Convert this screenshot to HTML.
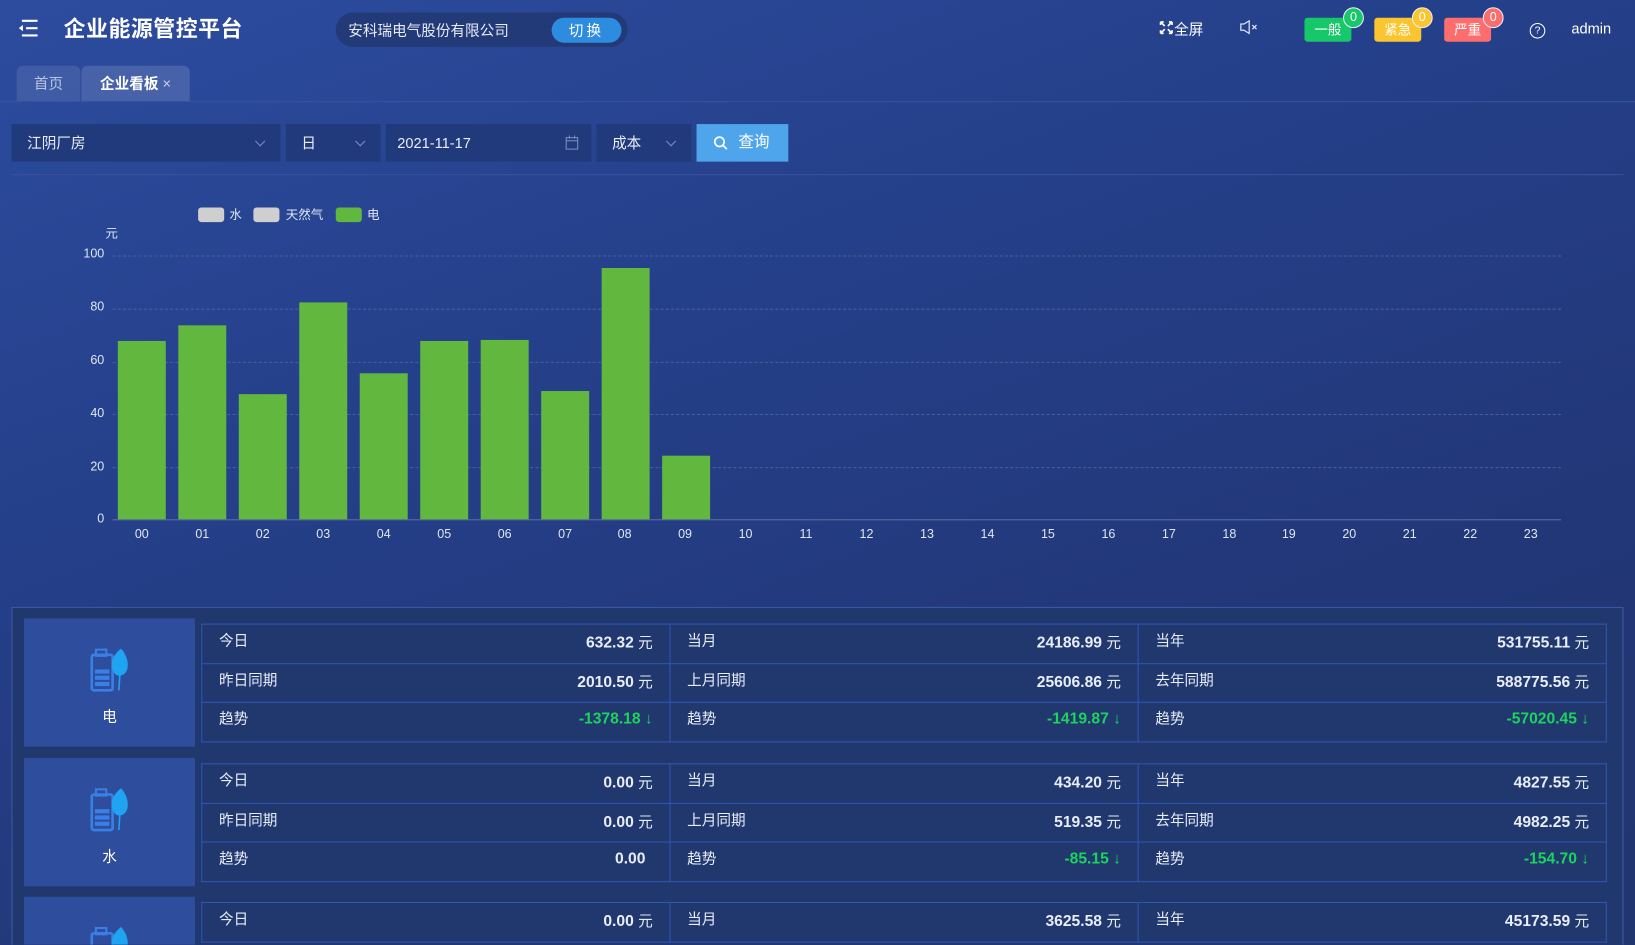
<!DOCTYPE html>
<html><head><meta charset="utf-8">
<style>
*{margin:0;padding:0;box-sizing:border-box}
html,body{width:1635px;height:945px;overflow:hidden;background:#223777}
body{font-family:"Liberation Sans","Noto Sans CJK SC",sans-serif;color:#fff}
#w{position:absolute;left:0;top:0;width:1568px;height:906px;transform:scale(1.04273);transform-origin:0 0;
background:linear-gradient(160deg,#2d4c9f 0%,#25408a 35%,#223778 70%,#21356f 100%);overflow:hidden}
.a{position:absolute}
.title{left:61px;top:12px;font-size:21px;font-weight:bold;letter-spacing:0.5px}
.pill{left:322px;top:12px;width:280px;height:33px;border-radius:17px;background:#233a78}
.pill span{position:absolute;left:12px;top:7px;font-size:14px;color:#e6ebf7}
.pill b{position:absolute;left:207px;top:5px;width:67px;height:24px;border-radius:12px;background:#2e8ce0;font-weight:normal;font-size:14px;text-align:center;line-height:24px;letter-spacing:3px}
.bd{top:17px;width:45px;height:23px;border-radius:3px;font-size:13px;text-align:center;line-height:23px}
.cnt{top:7px;width:20px;height:20px;border-radius:10px;border:1.5px solid #e8eef8;font-size:12px;text-align:center;line-height:17px}
.tab{top:63px;height:34px;border-radius:6px 6px 0 0;font-size:14px;line-height:34px;text-align:center}
.sel{top:119px;height:36px;background:#213a7c;font-size:14px;line-height:36px;padding-left:15px;color:#e8edf8}
.chev{position:absolute;right:16px;top:13px;width:7px;height:7px;border-right:1px solid #7d8fbf;border-bottom:1px solid #7d8fbf;transform:rotate(45deg)}
.yl{font-size:12px;color:#e0e6f4;width:40px;text-align:right;left:60px}
.xl{font-size:12px;color:#e0e6f4;top:505px;width:30px;text-align:center}
.grid{left:108px;width:1389px;height:0;border-top:1px dashed #45609e}
.bar{background:#62b73f;width:46px}
.panel{left:23px;width:164px;height:123px;background:#2e4d9c}
.panel .n{position:absolute;left:0;width:164px;top:84px;text-align:center;font-size:14px}
table{position:absolute;left:193px;width:1348px;height:113px;border-collapse:collapse;table-layout:fixed}
td{border:1px solid #2f56b0;height:37.7px;font-size:14px;padding:0 16px;color:#e8edf8;position:relative}
td .v{position:absolute;right:16px;top:7px;font-weight:bold;font-size:15px}
td .v i{font-style:normal;font-weight:normal;font-size:14px}
td .l{position:absolute;left:16px;top:5px}
.g{color:#1ad45c}
</style></head><body><div id="w">
<svg class="a" style="left:16px;top:18px" width="22" height="18" viewBox="0 0 22 18"><g stroke="#fff" stroke-width="2"><line x1="5" y1="2" x2="20" y2="2"/><line x1="9" y1="9" x2="20" y2="9"/><line x1="5" y1="16" x2="20" y2="16"/></g><path d="M6 6 L2 9 L6 12Z" fill="#fff"/></svg>
<div class="a title">企业能源管控平台</div>
<div class="a pill"><span>安科瑞电气股份有限公司</span><b>切换</b></div>
<svg class="a" style="left:1112px;top:20px" width="13" height="13" viewBox="0 0 13 13"><g stroke="#fff" stroke-width="1.6" fill="none"><path d="M1 1 L5 5 M1 1 h3 M1 1 v3 M12 1 L8 5 M12 1 h-3 M12 1 v3 M1 12 L5 8 M1 12 h3 M1 12 v-3 M12 12 L8 8 M12 12 h-3 M12 12 v-3"/></g></svg>
<div class="a" style="left:1126px;top:18px;font-size:14px">全屏</div>
<svg class="a" style="left:1189px;top:19px" width="20" height="14" viewBox="0 0 20 14"><path d="M1 4 h3 l5-3 v12 l-5-3 h-3z" fill="none" stroke="#dfe5f3" stroke-width="1.2"/><path d="M12 5 l4 4 M16 5 l-4 4" stroke="#dfe5f3" stroke-width="1.2"/></svg>
<div class="a bd" style="left:1251px;background:#17c86a">一般</div><div class="a cnt" style="left:1288px;background:#17c86a">0</div>
<div class="a bd" style="left:1318px;background:#fbc52f">紧急</div><div class="a cnt" style="left:1354px;background:#fbc52f">0</div>
<div class="a bd" style="left:1385px;background:#fc6d6d">严重</div><div class="a cnt" style="left:1422px;background:#fc6d6d">0</div>
<div class="a" style="left:1467px;top:22px;width:15px;height:15px;border:1.3px solid #fff;border-radius:50%;font-size:10px;text-align:center;line-height:13px">?</div>
<div class="a" style="left:1507px;top:19px;font-size:14px">admin</div>
<div class="a tab" style="left:16px;width:61px;background:rgba(255,255,255,0.1);color:#b8c4e2">首页</div>
<div class="a tab" style="left:78px;width:104px;background:#4862a9;font-weight:bold">企业看板 <span style="font-weight:normal;color:#c8d2ea">×</span></div>
<div class="a" style="left:0;top:97px;width:1568px;height:1px;background:#3553a0"></div>
<div class="a sel" style="left:11px;width:258px">江阴厂房<i class="chev"></i></div>
<div class="a sel" style="left:274px;width:91px">日<i class="chev"></i></div>
<div class="a sel" style="left:370px;width:197px;padding-left:11px">2021-11-17
<svg style="position:absolute;right:12px;top:11px" width="13" height="14" viewBox="0 0 13 14"><rect x="1" y="2" width="11" height="11" fill="none" stroke="#7d8fbf"/><line x1="1" y1="5" x2="12" y2="5" stroke="#7d8fbf"/><line x1="4" y1="0" x2="4" y2="3" stroke="#7d8fbf"/><line x1="9" y1="0" x2="9" y2="3" stroke="#7d8fbf"/></svg></div>
<div class="a sel" style="left:572px;width:91px">成本<i class="chev"></i></div>
<div class="a" style="left:668px;top:119px;width:88px;height:36px;background:#4fa5ec;font-size:15px;line-height:36px;padding-left:40px">查询
<svg style="position:absolute;left:16px;top:11px" width="14" height="14" viewBox="0 0 14 14"><circle cx="6" cy="6" r="4.5" fill="none" stroke="#fff" stroke-width="1.6"/><line x1="9.3" y1="9.3" x2="13" y2="13" stroke="#fff" stroke-width="1.6"/></svg></div>
<div class="a" style="left:11px;top:167px;width:1546px;height:1px;background:#3553a0"></div>
<div class="a" style="left:190px;top:199px;width:25px;height:14px;border-radius:3px;background:#cfcfcf"></div>
<div class="a" style="left:220px;top:197px;font-size:12px;color:#e0e6f4">水</div>
<div class="a" style="left:243px;top:199px;width:25px;height:14px;border-radius:3px;background:#cfcfcf"></div>
<div class="a" style="left:274px;top:197px;font-size:12px;color:#e0e6f4">天然气</div>
<div class="a" style="left:322px;top:199px;width:25px;height:14px;border-radius:3px;background:#62b73f"></div>
<div class="a" style="left:352px;top:197px;font-size:12px;color:#e0e6f4">电</div>
<div class="a" style="left:101px;top:215px;font-size:12px;color:#e0e6f4">元</div>
<div class="a grid" style="top:245px"></div><div class="a grid" style="top:296px"></div><div class="a grid" style="top:347px"></div><div class="a grid" style="top:397px"></div><div class="a grid" style="top:448px"></div>
<div class="a" style="left:108px;top:498px;width:1389px;height:1px;background:#5a6fa6"></div>
<div class="a yl" style="top:236px">100</div><div class="a yl" style="top:287px">80</div><div class="a yl" style="top:338px">60</div><div class="a yl" style="top:389px">40</div><div class="a yl" style="top:440px">20</div><div class="a yl" style="top:490px">0</div>
<div class="a bar" style="left:113px;top:327px;height:171px"></div>
<div class="a bar" style="left:171px;top:312px;height:186px"></div>
<div class="a bar" style="left:229px;top:378px;height:120px"></div>
<div class="a bar" style="left:287px;top:290px;height:208px"></div>
<div class="a bar" style="left:345px;top:358px;height:140px"></div>
<div class="a bar" style="left:403px;top:327px;height:171px"></div>
<div class="a bar" style="left:461px;top:326px;height:172px"></div>
<div class="a bar" style="left:519px;top:375px;height:123px"></div>
<div class="a bar" style="left:577px;top:257px;height:241px"></div>
<div class="a bar" style="left:635px;top:437px;height:61px"></div>
<div class="a xl" style="left:121px">00</div><div class="a xl" style="left:179px">01</div><div class="a xl" style="left:237px">02</div><div class="a xl" style="left:295px">03</div><div class="a xl" style="left:353px">04</div><div class="a xl" style="left:411px">05</div><div class="a xl" style="left:469px">06</div><div class="a xl" style="left:527px">07</div><div class="a xl" style="left:584px">08</div><div class="a xl" style="left:642px">09</div><div class="a xl" style="left:700px">10</div><div class="a xl" style="left:758px">11</div><div class="a xl" style="left:816px">12</div><div class="a xl" style="left:874px">13</div><div class="a xl" style="left:932px">14</div><div class="a xl" style="left:990px">15</div><div class="a xl" style="left:1048px">16</div><div class="a xl" style="left:1106px">17</div><div class="a xl" style="left:1164px">18</div><div class="a xl" style="left:1221px">19</div><div class="a xl" style="left:1279px">20</div><div class="a xl" style="left:1337px">21</div><div class="a xl" style="left:1395px">22</div><div class="a xl" style="left:1453px">23</div>
<div class="a" style="left:11px;top:582px;width:1546px;height:330px;border:1px solid #3a5aa8;background:#21386f"></div>

<div class="a panel" style="top:593px"><svg style="position:absolute;left:63px;top:27px" width="40" height="44" viewBox="0 0 40 44"><rect x="2" y="8" width="20" height="34" rx="2" fill="none" stroke="#3a7fe6" stroke-width="2.5"/><rect x="6" y="3" width="10" height="6" fill="none" stroke="#3a7fe6" stroke-width="2"/><rect x="5" y="22" width="14" height="4" fill="#3a7fe6"/><rect x="5" y="28" width="14" height="4" fill="#3a7fe6"/><rect x="5" y="34" width="14" height="4" fill="#3a7fe6"/><path d="M30 2 C22 8 18 18 24 26 C28 30 34 28 36 22 C38 14 34 6 30 2Z" fill="#1ea4f0"/><path d="M30 10 L28 42" stroke="#1ea4f0" stroke-width="1.5"/></svg><div class="n">电</div></div>
<table style="top:598px"><tr><td><span class="l">今日</span><span class="v">632.32 <i>元</i></span></td><td><span class="l">当月</span><span class="v">24186.99 <i>元</i></span></td><td><span class="l">当年</span><span class="v">531755.11 <i>元</i></span></td></tr>
<tr><td><span class="l">昨日同期</span><span class="v">2010.50 <i>元</i></span></td><td><span class="l">上月同期</span><span class="v">25606.86 <i>元</i></span></td><td><span class="l">去年同期</span><span class="v">588775.56 <i>元</i></span></td></tr>
<tr><td><span class="l">趋势</span><span class="v g">-1378.18 ↓</span></td><td><span class="l">趋势</span><span class="v g">-1419.87 ↓</span></td><td><span class="l">趋势</span><span class="v g">-57020.45 ↓</span></td></tr></table>

<div class="a panel" style="top:727px"><svg style="position:absolute;left:63px;top:27px" width="40" height="44" viewBox="0 0 40 44"><rect x="2" y="8" width="20" height="34" rx="2" fill="none" stroke="#3a7fe6" stroke-width="2.5"/><rect x="6" y="3" width="10" height="6" fill="none" stroke="#3a7fe6" stroke-width="2"/><rect x="5" y="22" width="14" height="4" fill="#3a7fe6"/><rect x="5" y="28" width="14" height="4" fill="#3a7fe6"/><rect x="5" y="34" width="14" height="4" fill="#3a7fe6"/><path d="M30 2 C22 8 18 18 24 26 C28 30 34 28 36 22 C38 14 34 6 30 2Z" fill="#1ea4f0"/><path d="M30 10 L28 42" stroke="#1ea4f0" stroke-width="1.5"/></svg><div class="n">水</div></div>
<table style="top:732px"><tr><td><span class="l">今日</span><span class="v">0.00 <i>元</i></span></td><td><span class="l">当月</span><span class="v">434.20 <i>元</i></span></td><td><span class="l">当年</span><span class="v">4827.55 <i>元</i></span></td></tr>
<tr><td><span class="l">昨日同期</span><span class="v">0.00 <i>元</i></span></td><td><span class="l">上月同期</span><span class="v">519.35 <i>元</i></span></td><td><span class="l">去年同期</span><span class="v">4982.25 <i>元</i></span></td></tr>
<tr><td><span class="l">趋势</span><span class="v" style="right:23px">0.00</span></td><td><span class="l">趋势</span><span class="v g">-85.15 ↓</span></td><td><span class="l">趋势</span><span class="v g">-154.70 ↓</span></td></tr></table>

<div class="a panel" style="top:860px;height:46px;overflow:hidden"><svg style="position:absolute;left:63px;top:27px" width="40" height="44" viewBox="0 0 40 44"><rect x="2" y="8" width="20" height="34" rx="2" fill="none" stroke="#3a7fe6" stroke-width="2.5"/><rect x="6" y="3" width="10" height="6" fill="none" stroke="#3a7fe6" stroke-width="2"/><path d="M30 2 C22 8 18 18 24 26 C28 30 34 28 36 22 C38 14 34 6 30 2Z" fill="#1ea4f0"/></svg></div>
<table style="top:865px;height:38px"><tr><td><span class="l">今日</span><span class="v">0.00 <i>元</i></span></td><td><span class="l">当月</span><span class="v">3625.58 <i>元</i></span></td><td><span class="l">当年</span><span class="v">45173.59 <i>元</i></span></td></tr></table>
</div></body></html>
